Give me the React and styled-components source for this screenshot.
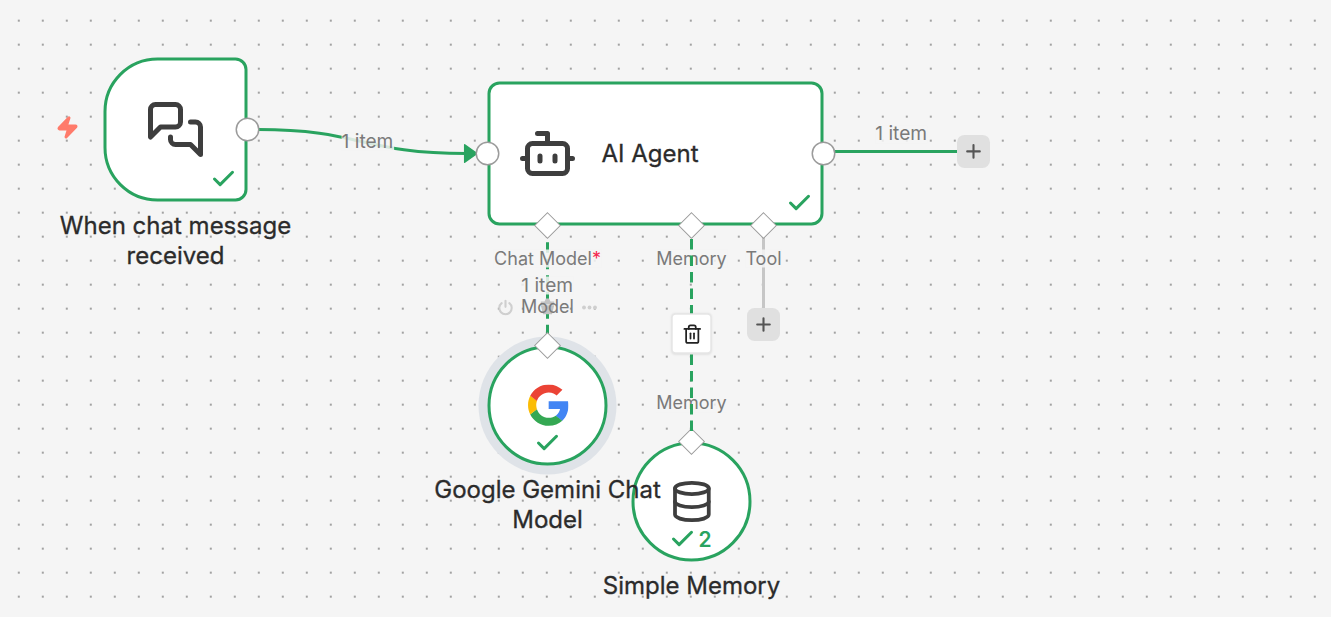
import React from 'react';
import styled, { createGlobalStyle } from 'styled-components';
import { Trash2 } from 'lucide-react';

const GREEN = '#29a35f';

const GlobalStyle = createGlobalStyle`
  * {
    box-sizing: border-box;
  }
  body {
    margin: 0;
    overflow: hidden;
    font-family: Inter, "Liberation Sans", sans-serif;
  }
`;

const Canvas = styled.main`
  position: relative;
  width: 100vw;
  height: 100vh;
  overflow: hidden;
  background: #f5f5f5;
`;

const Grid = styled.svg`
  display: block;
  width: 100%;
  height: 100%;
`;

// everything inside is in canvas units, zoomed by 1.5
const Viewport = styled.div`
  position: absolute;
  left: 0;
  top: 0;
  transform: translate(103.5px, 57.5px) scale(1.5);
  transform-origin: 0 0;
`;

const Edges = styled.svg`
  position: absolute;
  left: 0;
  top: 0;
  width: 1px;
  height: 1px;
  overflow: visible;
  fill: none;
  pointer-events: none;
`;

const Line = styled.path`
  stroke: ${(p) => p.$color || GREEN};
  stroke-width: 2;
  stroke-linecap: ${(p) => (p.$dashed ? 'square' : 'butt')};
  stroke-dasharray: ${(p) => (p.$dashed ? '5 6' : 'none')};
`;

const Arrow = styled.path`
  fill: ${GREEN};
  stroke: ${GREEN};
  stroke-width: 1;
  stroke-linejoin: round;
`;

// centres its content on a point of the canvas
const Spot = styled.div`
  position: absolute;
  left: 0;
  top: 0;
  transform: translate(${(p) => p.$x}px, ${(p) => p.$y}px) translate(-50%, -50%);
`;

const Label = styled.div`
  font-size: ${(p) => (p.$count ? 12.75 : 12)}px;
  line-height: 12px;
  white-space: nowrap;
  color: #7a7a7a;
  background: ${(p) => (p.$clear ? 'transparent' : 'rgba(245, 245, 245, 0.85)')};
`;

const Required = styled.span`
  color: #f5274e;
`;

const Node = styled.div`
  position: absolute;
  left: ${(p) => p.$x}px;
  top: ${(p) => p.$y}px;
  width: ${(p) => p.$w}px;
  height: ${(p) => p.$h}px;
  display: flex;
  align-items: center;
  justify-content: ${(p) => (p.$wide ? 'flex-start' : 'center')};
  gap: 16px;
  padding-left: ${(p) => (p.$wide ? 18 : 0)}px;
  border: 2px solid ${GREEN};
  border-radius: ${(p) => p.$radius};
  background: #fff;
  box-shadow: ${(p) => (p.$selected ? '0 0 0 6px #dfe3e8' : 'none')};
`;

const Icon = styled.svg`
  flex: none;
  width: ${(p) => p.$size}px;
  height: ${(p) => p.$size}px;
  fill: none;
  stroke: #3e3e3e;
  stroke-width: 2;
  stroke-linecap: round;
  stroke-linejoin: round;
`;

const Logo = styled.svg`
  width: 27px;
  height: 27.6px;
  margin-top: 0.3px;
`;

const Name = styled.span`
  font-size: 16px;
  font-weight: 400;
  line-height: 20px;
  color: #2b2b2b;
  -webkit-text-stroke: 0.2px #2b2b2b;
  transform: translateY(-0.6px);
`;

const Caption = styled.div`
  position: absolute;
  top: 100%;
  left: 50%;
  width: 160px;
  margin-top: 8px;
  transform: translate(-50%, -0.6px);
  font-size: 16px;
  font-weight: 400;
  line-height: 20px;
  text-align: center;
  color: #2b2b2b;
  -webkit-text-stroke: 0.2px #2b2b2b;
`;

const Status = styled.div`
  position: absolute;
  right: 5px;
  bottom: 4.2px;
  left: 5px;
  display: flex;
  align-items: center;
  justify-content: ${(p) => (p.$center ? 'center' : 'flex-end')};
  gap: 1.5px;
  padding-right: ${(p) => (p.$count ? 1.4 : 0)}px;
  font-size: 14px;
  font-weight: 600;
  line-height: 18px;
  color: ${GREEN};
`;

const Tick = styled.svg`
  width: 18px;
  height: 18px;
  fill: none;
  stroke: ${GREEN};
  stroke-width: 2.7;
  stroke-linecap: round;
  stroke-linejoin: round;
`;

// strips that straddle one side of a node and hold its ports
const SideRail = styled.div`
  position: absolute;
  top: 0;
  bottom: 0;
  ${(p) => p.$side}: -10px;
  display: flex;
  align-items: center;
`;

const TopRail = styled.div`
  position: absolute;
  top: -8px;
  right: 0;
  left: 0;
  display: flex;
  justify-content: center;
`;

const Slots = styled.div`
  position: absolute;
  top: 88px;
  left: 14px;
  display: grid;
  grid-template-columns: repeat(4, 48px);
`;

const Slot = styled.div`
  grid-column: ${(p) => p.$col};
  display: flex;
  flex-direction: column;
  align-items: center;
  gap: 10px;
`;

const Port = styled.div`
  width: 16px;
  height: 16px;
  border: 1px solid #9b9b9b;
  border-radius: 50%;
  background: #fff;
`;

const Diamond = styled.svg`
  flex: none;
  width: 12px;
  height: 12px;
  overflow: visible;
  fill: #fff;
  stroke: #9b9b9b;
  stroke-width: 0.7;
`;

const AddButton = styled.div`
  display: flex;
  align-items: center;
  justify-content: center;
  width: 22px;
  height: 22px;
  margin-top: ${(p) => p.$drop || 0}px;
  border-radius: 5px;
  background: #e0e0e0;
`;

const DeleteButton = styled.div`
  display: flex;
  align-items: center;
  justify-content: center;
  width: 27px;
  height: 27px;
  border: 0.7px solid #e6e6e6;
  border-radius: 3px;
  background: #fff;
  color: #222;
  box-shadow: 0 0.3px 1.5px rgba(0, 0, 0, 0.08);
`;

const Toolbar = styled.div`
  display: flex;
  align-items: center;
  justify-content: space-between;
  width: 67px;
  color: #cfcfcf;
`;

const Bolt = styled.svg`
  display: block;
  width: 16px;
  height: 16px;
  fill: #ff7b6b;
  stroke: #ff7b6b;
  stroke-width: 2;
  stroke-linejoin: round;
`;

const Check = () => (
  <Tick viewBox="0 0 24 24">
    <path d="M20 6 9 17l-5-5" />
  </Tick>
);

const Plus = () => (
  <svg width="10" height="10" viewBox="0 0 10 10" stroke="#555" strokeWidth="1.4" strokeLinecap="round">
    <path d="M5 .8v8.4M.8 5h8.4" />
  </svg>
);

const Gate = () => (
  <Diamond viewBox="0 0 12 12">
    <path d="M6-2.5 14.5 6 6 14.5-2.5 6z" />
  </Diamond>
);

const App = () => (
  <>
    <GlobalStyle />
    <Canvas>
      <Grid>
        <defs>
          <pattern id="dots" x="6.8" y="8.6" width="24" height="24" patternUnits="userSpaceOnUse">
            <circle cx="12" cy="12" r="0.85" fill="#4c4c4c" />
          </pattern>
        </defs>
        <rect width="100%" height="100%" fill="url(#dots)" />
      </Grid>

      <Viewport>
        <Edges>
          <Line d="M103 48C172 48 172 64 242 64" />
          <Arrow d="M240.8 58.2 249 64l-8.2 5.8z" />
          <Line d="M487 62.6H570" />
          <Line $dashed d="M296 124.2V192" />
          <Line $color="#c6c6c6" d="M440 120V168" />
        </Edges>

        <Spot $x={176} $y={56}>
          <Label $count>1 item</Label>
        </Spot>
        <Spot $x={531.8} $y={51.1}>
          <Label $count>1 item</Label>
        </Spot>
        <Spot $x={295.8} $y={152}>
          <Label $count>1 item</Label>
        </Spot>
        <Spot $x={296} $y={166.2}>
          <Toolbar>
            <svg width="11" height="11" viewBox="0 0 24 24" fill="none" stroke="currentColor" strokeWidth="3" strokeLinecap="round">
              <path d="M12 2v9M17.6 5.6a9 9 0 1 1-11.2 0" />
            </svg>
            <svg width="11" height="12" viewBox="0 0 22 24" fill="#c2c2c2">
              <path d="M2 5h5l2-4h4l2 4h5v4H2zM2 10h18l-3 12H5z" />
            </svg>
            <svg width="11" height="11" viewBox="0 0 24 24" fill="currentColor">
              <circle cx="4" cy="12" r="2.8" />
              <circle cx="12" cy="12" r="2.8" />
              <circle cx="20" cy="12" r="2.8" />
            </svg>
          </Toolbar>
        </Spot>
        <Spot $x={296} $y={166.6}>
          <Label $clear>Model</Label>
        </Spot>
        <Spot $x={392} $y={230.5}>
          <Label>Memory</Label>
        </Spot>

        <Spot $x={-24} $y={46.6}>
          <Bolt viewBox="0 0 24 24">
            <path d="M4 14a1 1 0 0 1-.78-1.63l9.9-10.2a.5.5 0 0 1 .86.46l-1.92 6.02A1 1 0 0 0 13 10h7a1 1 0 0 1 .78 1.63l-9.9 10.2a.5.5 0 0 1-.86-.46l1.92-6.02A1 1 0 0 0 11 14z" />
          </Bolt>
        </Spot>

        <Node $x={0} $y={0} $w={96} $h={96} $radius="36px 8px 8px 36px">
          <Icon $size={40} viewBox="0 0 24 24">
            <path d="M14 9a2 2 0 0 1-2 2H6l-4 4V4a2 2 0 0 1 2-2h8a2 2 0 0 1 2 2z" />
            <path d="M18 9h2a2 2 0 0 1 2 2v11l-4-4h-6a2 2 0 0 1-2-2v-1" />
          </Icon>
          <Status>
            <Check />
          </Status>
          <SideRail $side="right">
            <Port />
          </SideRail>
          <Caption>When chat message received</Caption>
        </Node>

        <Node $wide $x={256} $y={16} $w={224} $h={96} $radius="8px">
          <Icon $size={40} viewBox="0 0 24 24">
            <path d="M12 8V4H8" />
            <rect width="16" height="12" x="4" y="8" rx="2" />
            <path d="M2 14h2M20 14h2M15 13v2M9 13v2" />
          </Icon>
          <Name>AI Agent</Name>
          <Status>
            <Check />
          </Status>
          <SideRail $side="left">
            <Port />
          </SideRail>
          <SideRail $side="right">
            <Port />
          </SideRail>
          <Slots>
            <Slot $col={1}>
              <Gate />
              <Label>
                Chat Model<Required>*</Required>
              </Label>
            </Slot>
            <Slot $col={3}>
              <Gate />
              <Label>Memory</Label>
            </Slot>
            <Slot $col={4}>
              <Gate />
              <Label>Tool</Label>
              <AddButton $drop={17.4}>
                <Plus />
              </AddButton>
            </Slot>
          </Slots>
        </Node>

        <Node $x={352} $y={256} $w={80} $h={80} $radius="50%">
          <Icon $size={30} viewBox="0 0 24 24">
            <ellipse cx="12.2" cy="5" rx="9" ry="3" />
            <path d="M3.2 5v14a9 3 0 0 0 18 0V5" />
            <path d="M3.2 12a9 3 0 0 0 18 0" />
          </Icon>
          <Status $center $count>
            <Check />2
          </Status>
          <TopRail>
            <Gate />
          </TopRail>
          <Caption>Simple Memory</Caption>
        </Node>

        <Node $selected $x={256} $y={192} $w={80} $h={80} $radius="50%">
          <Logo viewBox="0 0 256 262">
            <path fill="#4285f4" d="M255.9 133.5c0-10.8-.9-18.6-2.8-26.7H130.6v48.4h71.9c-1.5 12-9.3 30.2-26.7 42.4l-.2 1.6 38.7 30 2.7.3c24.7-22.8 38.9-56.3 38.9-96" />
            <path fill="#34a853" d="M130.6 261.1c35.2 0 64.8-11.6 86.4-31.6l-41.2-31.9c-11 7.7-25.8 13.1-45.2 13.1-34.5 0-63.8-22.8-74.3-54.2l-1.5.1-40.3 31.2-.5 1.5c21.4 42.6 65.5 71.8 116.6 71.8" />
            <path fill="#fbbc05" d="M56.3 156.4c-2.8-8.2-4.4-16.9-4.4-25.9s1.6-17.7 4.2-25.9v-1.7L15.3 71.3l-1.3.6C5.1 89.6 0 109.5 0 130.6s5.1 40.9 14 58.6l42.3-32.8" />
            <path fill="#eb4335" d="M130.6 50.5c24.5 0 41 10.6 50.4 19.4l36.8-35.9C195.2 13 165.8 0 130.6 0 79.5 0 35.4 29.3 14 71.9l42.2 32.7c10.6-31.4 39.9-54.1 74.4-54.1" />
          </Logo>
          <Status $center>
            <Check />
          </Status>
          <TopRail>
            <Gate />
          </TopRail>
          <Caption>Google Gemini Chat Model</Caption>
        </Node>

        {/* hovered edge, raised above nodes and labels */}
        <Edges>
          <Line $dashed d="M392 122V252" />
        </Edges>

        <Spot $x={580} $y={62.6}>
          <AddButton>
            <Plus />
          </AddButton>
        </Spot>
        <Spot $x={392} $y={184}>
          <DeleteButton>
            <Trash2 size={14} />
          </DeleteButton>
        </Spot>
      </Viewport>
    </Canvas>
  </>
);

export default App;
